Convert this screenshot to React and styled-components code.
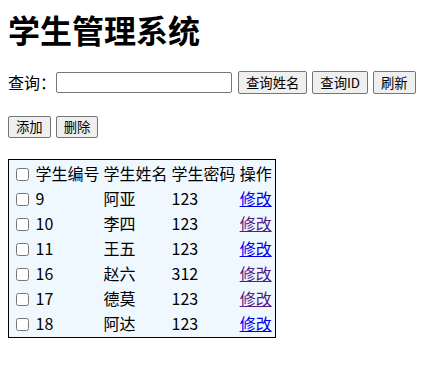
import React from 'react'
import styled, { createGlobalStyle } from 'styled-components'

const GlobalStyle = createGlobalStyle`
  body {
    margin: 8px;
    background: #ffffff;
    color: #000000;
    font-family: "Noto Sans CJK SC", "Noto Sans", sans-serif;
    font-size: 16px;
  }
`

const students = [
  { id: 9, name: '阿亚', password: '123', visited: false },
  { id: 10, name: '李四', password: '123', visited: true },
  { id: 11, name: '王五', password: '123', visited: false },
  { id: 16, name: '赵六', password: '312', visited: true },
  { id: 17, name: '德莫', password: '123', visited: true },
  { id: 18, name: '阿达', password: '123', visited: false },
]

const ScTitle = styled.h1`
  margin: 0 0 21px;
  font-size: 32px;
  line-height: 42px;
  font-weight: bold;
`
const ScToolbar = styled.div`
  display: flex;
  align-items: center;
  height: 23px;
  margin-bottom: 21px;
`
const ScLabel = styled.span`
  width: 48px;
  line-height: 21px;
`
const ScInput = styled.input`
  box-sizing: border-box;
  width: 176px;
  height: 21px;
  margin: 0 6px 0 0;
  padding: 1px 2px;
  border: 1px solid #767676;
  border-radius: 2px;
  font-family: inherit;
`
const ScButton = styled.button`
  box-sizing: border-box;
  height: ${(p) => (p.$tall ? '23px' : '22px')};
  margin: 0 5px 0 0;
  padding: 0 7px;
  border: 1px solid #767676;
  border-radius: 2px;
  background: #efefef;
  color: #000000;
  font-family: "Noto Sans CJK SC", sans-serif;
  font-size: 13.33px;
  line-height: 17px;
`
const ScTable = styled.table`
  border: 1px solid #000000;
  border-spacing: 2px;
  background: #f0f8ff;
  font-size: 16px;
`
const ScCell = styled.td`
  height: 21px;
  padding: 1px;
  line-height: 21px;
  text-align: left;
  vertical-align: top;
  white-space: nowrap;
`
const ScCheck = styled.input`
  box-sizing: border-box;
  width: 13px;
  height: 13px;
  margin: 5px 3px 3px 4px;
  vertical-align: top;
`
const ScLink = styled.a`
  color: ${(p) => (p.$visited ? '#551a8b' : '#0000ee')};
  text-decoration: underline;
`

const App = () => {
  return (
    <React.Fragment>
      <GlobalStyle />
      <ScTitle>学生管理系统</ScTitle>
      <ScToolbar>
        <ScLabel>查询：</ScLabel>
        <ScInput type="text" />
        <ScButton $tall>查询姓名</ScButton>
        <ScButton $tall>查询ID</ScButton>
        <ScButton $tall>刷新</ScButton>
      </ScToolbar>
      <ScToolbar>
        <ScButton>添加</ScButton>
        <ScButton>删除</ScButton>
      </ScToolbar>
      <ScTable>
        <tbody>
          <tr>
            <ScCell>
              <ScCheck type="checkbox" /> 学生编号
            </ScCell>
            <ScCell>学生姓名</ScCell>
            <ScCell>学生密码</ScCell>
            <ScCell>操作</ScCell>
          </tr>
          {students.map((s) => (
            <tr key={s.id}>
              <ScCell>
                <ScCheck type="checkbox" /> {s.id}
              </ScCell>
              <ScCell>{s.name}</ScCell>
              <ScCell>{s.password}</ScCell>
              <ScCell>
                <ScLink href="#" $visited={s.visited}>
                  修改
                </ScLink>
              </ScCell>
            </tr>
          ))}
        </tbody>
      </ScTable>
    </React.Fragment>
  )
}

export default App
